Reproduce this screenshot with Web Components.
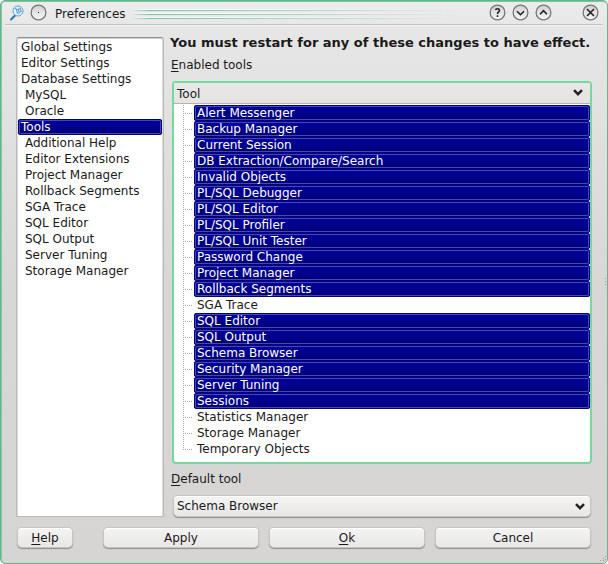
<!DOCTYPE html>
<html lang="en">
<head>
<meta charset="utf-8">
<title>Preferences</title>
<style>
html, body { margin: 0; height: 100%; background: #fff; }
body { font: 12px/16px "DejaVu Sans", sans-serif; color: #1a1a1a; }
u { text-underline-offset: 2px; text-decoration-skip-ink: none; }
</style>
</head>
<body>
<pref-window>
  <title-bar slot="title">Preferences</title-bar>
  <category-list slot="nav">
    <category-item>Global Settings</category-item>
    <category-item>Editor Settings</category-item>
    <category-item>Database Settings</category-item>
    <category-item nested>MySQL</category-item>
    <category-item nested>Oracle</category-item>
    <category-item selected>Tools</category-item>
    <category-item nested>Additional Help</category-item>
    <category-item nested>Editor Extensions</category-item>
    <category-item nested>Project Manager</category-item>
    <category-item nested>Rollback Segments</category-item>
    <category-item nested>SGA Trace</category-item>
    <category-item nested>SQL Editor</category-item>
    <category-item nested>SQL Output</category-item>
    <category-item nested>Server Tuning</category-item>
    <category-item nested>Storage Manager</category-item>
  </category-list>
  <tools-panel slot="panel">
    <tool-tree slot="tree">
      <tool-row selected>Alert Messenger</tool-row>
      <tool-row selected>Backup Manager</tool-row>
      <tool-row selected>Current Session</tool-row>
      <tool-row selected>DB Extraction/Compare/Search</tool-row>
      <tool-row selected>Invalid Objects</tool-row>
      <tool-row selected>PL/SQL Debugger</tool-row>
      <tool-row selected>PL/SQL Editor</tool-row>
      <tool-row selected>PL/SQL Profiler</tool-row>
      <tool-row selected>PL/SQL Unit Tester</tool-row>
      <tool-row selected>Password Change</tool-row>
      <tool-row selected>Project Manager</tool-row>
      <tool-row selected>Rollback Segments</tool-row>
      <tool-row>SGA Trace</tool-row>
      <tool-row selected>SQL Editor</tool-row>
      <tool-row selected>SQL Output</tool-row>
      <tool-row selected>Schema Browser</tool-row>
      <tool-row selected>Security Manager</tool-row>
      <tool-row selected>Server Tuning</tool-row>
      <tool-row selected>Sessions</tool-row>
      <tool-row>Statistics Manager</tool-row>
      <tool-row>Storage Manager</tool-row>
      <tool-row>Temporary Objects</tool-row>
    </tool-tree>
  </tools-panel>
  <push-button slot="help"><u>H</u>elp</push-button>
  <push-button slot="actions">Apply</push-button>
  <push-button slot="actions"><u>O</u>k</push-button>
  <push-button slot="actions">Cancel</push-button>
</pref-window>
<script>
const define = (name, html) => customElements.define(name, class extends HTMLElement {
  constructor() {
    super();
    this.attachShadow({ mode: 'open' }).innerHTML = html;
  }
  connectedCallback() {
    const button = this.shadowRoot.querySelector('[data-toggle]');
    if (!button) return;
    const sync = () => button.setAttribute('aria-pressed', this.hasAttribute('selected'));
    sync();
    button.addEventListener('click', () => {
      if (button.dataset.toggle === 'single') {
        for (const item of this.parentElement.children) {
          item.removeAttribute('selected');
          item.shadowRoot.querySelector('button').setAttribute('aria-pressed', 'false');
        }
        this.setAttribute('selected', '');
      } else this.toggleAttribute('selected');
      sync();
    });
  }
});

define('pref-window', `
<style>
:host { display: flex; flex-direction: column; box-sizing: border-box; min-height: 100vh;
  border: 1px solid #64b48c; border-radius: 5px; box-shadow: inset 0 1px #7cc4a0, inset 1px 0 #8cc4a8;
  background: linear-gradient(#ececec, #e6e6e6 30px, #d8d7d5 280px, #d6d5d3); position: relative; overflow: hidden; }
main { flex: 1; display: grid; grid-template-columns: 148px minmax(0, 1fr); gap: 6px; padding: 12px 15px 0; }
footer { display: grid; grid-template-columns: 54px minmax(0, 1fr); gap: 32px; padding: 11px 17px 16px; }
.actions { display: grid; grid-auto-flow: column; grid-auto-columns: minmax(0, 1fr); gap: 12px; }
.grip { position: absolute; right: 0; bottom: 0; width: 8px; height: 8px; }
.side { position: absolute; right: 0; top: 50%; margin-top: -4px; width: 2px; height: 8px; }
svg { fill: #999; display: block; }
</style>
<slot name="title"></slot>
<main><slot name="nav"></slot><slot name="panel"></slot></main>
<footer><slot name="help"></slot><div class="actions"><slot name="actions"></slot></div></footer>
<svg class="side" viewBox="0 0 2 8"><path d="M0 0h1v1H0zM0 3h1v1H0zM0 6h1v1H0z"/></svg>
<svg class="grip" viewBox="0 0 8 8"><path d="M6 1h1v1H6zM4 3h1v1H4zM6 4h1v1H6zM1 5h1v1H1zM4 5h1v1H4z"/></svg>
`);

define('title-bar', `
<style>
:host { display: flex; align-items: center; box-sizing: border-box; height: 24px; margin: 0 4px; padding: 0 4px 0 4px;
  border-bottom: 1px solid #c2c2c2; box-shadow: 0 1px #f4f4f4; }
svg { display: block; }
.app { width: 16px; height: 16px; margin-right: 5px; }
h1 { font: inherit; margin: 2px 5px 0 8px; }
.lines { flex: 1; height: 10px; margin-top: 2px; background: repeating-linear-gradient(#fff 0 1px, #6fc79c 1px 2px, transparent 2px 4px);
  mask-image: linear-gradient(90deg, transparent, #000 5%, transparent 92%); }
button { border: 0; padding: 0; margin: 0; background: none; width: 17px; height: 17px; }
.controls { display: flex; gap: 6px; }
.close { margin-left: 24px; }
circle { fill: url(#face); stroke: #777; stroke-width: 1.3; }
.mark { fill: none; stroke: #222; stroke-width: 1.6; }
</style>
<svg class="app" viewBox="0 0 16 16"><path d="M6 10.500 2 14.500" stroke="#2878b8" stroke-width="2" stroke-linecap="round"/><g fill="none" stroke="#5c9fd2"><circle cx="9" cy="6" r="5" style="fill:#e6f2fb;stroke:#5c9fd2;stroke-width:1"/><path d="m5.500 4 1.500-.8L8.400 8.500l2-5.500 1.600 1-2.300 5M7 5l3-.8M11 7l2-1"/></g></svg>
<button aria-label="Window menu"><svg viewBox="0 0 17 17"><defs><linearGradient id="face" x2="0" y2="1"><stop stop-color="#d0d0d0"/><stop offset="1" stop-color="#f8f8f8"/></linearGradient></defs><circle cx="8.5" cy="8.5" r="7.4"/><path d="M8 8h1v1H8z" fill="#111"/></svg></button>
<h1><slot></slot></h1>
<span class="lines"></span>
<div class="controls">
<button aria-label="Help"><svg viewBox="0 0 17 17"><circle cx="8.5" cy="8.5" r="7.4"/><path class="mark" d="M6.500 6Q6.700 4.700 8.500 4.700T10.500 6.300C10.500 7.900 8.500 8 8.500 10M8.500 11.200v1.800"/></svg></button>
<button aria-label="Minimize"><svg viewBox="0 0 17 17"><circle cx="8.5" cy="8.5" r="7.4"/><path class="mark" d="m5 7.2 3.5 3.5L12 7.2"/></svg></button>
<button aria-label="Maximize"><svg viewBox="0 0 17 17"><circle cx="8.5" cy="8.5" r="7.4"/><path class="mark" d="M5 10.2l3.5-3.5 3.5 3.5"/></svg></button>
<button class="close" aria-label="Close"><svg viewBox="0 0 17 17"><circle cx="8.5" cy="8.5" r="7.4"/><path class="mark" d="m5 5 7 7m0-7-7 7"/></svg></button>
</div>
`);

define('category-list', `
<style>
:host { display: block; background: #fff; border: 1px solid #bababa; border-top: 1px solid #909090; border-radius: 3px 3px 1px 1px;
  box-shadow: inset 0 1px #cfcfcf, inset 1px 0 #dcdcdc, inset -1px 0 #dcdcdc; padding: 1px; }
</style>
<nav aria-label="Categories"><slot></slot></nav>
`);

define('category-item', `
<style>
:host { display: block; }
button { display: block; box-sizing: border-box; width: 100%; height: 16px; border: 0; border-radius: 3px; margin: 0; padding: 0 3px;
  background: none; font: inherit; color: inherit; text-align: left; white-space: nowrap; }
:host([nested]) button { padding-left: 7px; }
:host([selected]) button { color: #fff; background: linear-gradient(#0000a4, #000078); box-shadow: inset 0 0 0 1px #000080, inset 0 0 0 2px #4848a8; }
</style>
<button type="button" data-toggle="single"><slot></slot></button>
`);

define('tools-panel', `
<style>
:host { display: flex; flex-direction: column; min-width: 0; }
h2 { font: bold 13px/16px "DejaVu Sans", sans-serif; margin: -2px 0 6px; white-space: nowrap; }
label, .label { display: block; margin-left: 1px; }
.label { margin-bottom: 8px; }
label { margin: 7px 0 9px 1px; }
u { text-underline-offset: 2px; text-decoration-skip-ink: none; }
::slotted(tool-tree) { flex: 1; margin-left: 2px; }
.combo { display: grid; margin: 0 2px 0 4px; }
select { grid-area: 1 / 1; appearance: none; box-sizing: border-box; width: 100%; height: 20px; margin: 0 0 1px; padding: 0 24px 0 3px;
  border: 0; border-radius: 4px; font: inherit; color: inherit; background: linear-gradient(#f4f4f3, #e8e7e6);
  box-shadow: inset 0 1px #fff, 0 0 0 1px #c6c5c3, 0 1px 1px 1px #8c8b89; }
svg { grid-area: 1 / 1; justify-self: end; align-self: center; width: 10px; height: 7px; margin-right: 5px; pointer-events: none; }
</style>
<h2>You must restart for any of these changes to have effect.</h2>
<div class="label"><u>E</u>nabled tools</div>
<slot name="tree"></slot>
<label for="tool"><u>D</u>efault tool</label>
<div class="combo">
<select id="tool"><option>Schema Browser</option><option>SQL Editor</option><option>Project Manager</option></select>
<svg viewBox="0 0 10 7"><path d="m1 1.2 4 4 4-4" fill="none" stroke="#222" stroke-width="2.5"/></svg>
</div>
`);

define('tool-tree', `
<style>
:host { display: block; background: #fff; border: 2px solid #70dc9c; border-radius: 4px; }
.head { display: flex; align-items: center; justify-content: space-between; box-sizing: border-box; width: 100%; height: 21px; border: 0; border-bottom: 1px solid #b4b3b1;
  margin: 0 0 1px; padding: 1px 7px 0 3px; background: linear-gradient(#e9e8e7, #e5e4e2); font: inherit; color: inherit; }
svg { width: 10px; height: 7px; margin-bottom: 2px; }
.rows { padding: 0 0 3px 9px; }
</style>
<button class="head" type="button">Tool<svg viewBox="0 0 10 7"><path d="m1 1.2 4 4 4-4" fill="none" stroke="#222" stroke-width="2.5"/></svg></button>
<div class="rows" role="group" aria-label="Enabled tools"><slot></slot></div>
`);

define('tool-row', `
<style>
:host { display: grid; grid-template-columns: 11px minmax(0, 1fr); height: 16px; }
svg { width: 11px; height: 16px; }
path { fill: none; stroke: #a8a8a8; stroke-dasharray: 1 1; }
:host(:last-child) .down { display: none; }
button { border: 0; border-radius: 3px; margin: 0; padding: 0 3px; background: none; font: inherit; color: inherit; text-align: left; white-space: nowrap; }
:host([selected]) button { color: #fff; background: linear-gradient(#0000a4, #000078); box-shadow: inset 0 0 0 1px #000080, inset 0 0 0 2px #4848a8; }
</style>
<svg viewBox="0 0 11 16" aria-hidden="true"><path d="M.5 0v8M0 8.500h10"/><path class="down" d="M.5 8v8"/></svg>
<button type="button" data-toggle="multi"><slot></slot></button>
`);

define('push-button', `
<style>
:host { display: block; }
button { display: block; width: 100%; height: 19px; border: 0; border-radius: 4px; margin: 0; padding: 0; font: inherit; color: inherit;
  background: linear-gradient(#f4f4f3, #e8e7e6); box-shadow: inset 0 1px #fff, 0 0 0 1px #c6c5c3, 0 1px 1px 1px #8c8b89; }
</style>
<button type="button"><slot></slot></button>
`);
</script>
</body>
</html>
